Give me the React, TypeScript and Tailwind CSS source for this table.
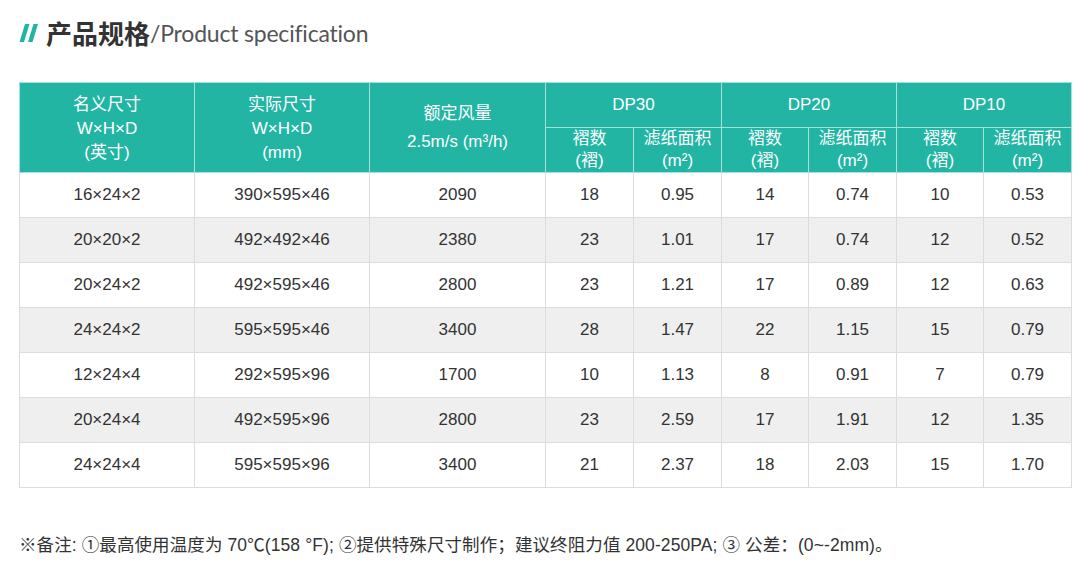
import React from "react";

const rows = [
  ["16×24×2", "390×595×46", "2090", "18", "0.95", "14", "0.74", "10", "0.53"],
  ["20×20×2", "492×492×46", "2380", "23", "1.01", "17", "0.74", "12", "0.52"],
  ["20×24×2", "492×595×46", "2800", "23", "1.21", "17", "0.89", "12", "0.63"],
  ["24×24×2", "595×595×46", "3400", "28", "1.47", "22", "1.15", "15", "0.79"],
  ["12×24×4", "292×595×96", "1700", "10", "1.13", "8", "0.91", "7", "0.79"],
  ["20×24×4", "492×595×96", "2800", "23", "2.59", "17", "1.91", "12", "1.35"],
  ["24×24×4", "595×595×96", "3400", "21", "2.37", "18", "2.03", "15", "1.70"],
];

const widths = [175, 175, 176, 88, 88, 87, 88, 87, 88];

const font = { fontFamily: '"Liberation Sans", "Noto Sans CJK SC", sans-serif' };

export default function App() {
  const th = "border border-[#a6e0d8] font-normal text-white text-[17px] text-center align-middle p-0";
  const sub = (
    <>
      <th className={th + " leading-[22px]"}>褶数<br />(褶)</th>
      <th className={th + " leading-[22px]"}>滤纸面积<br />(m²)</th>
    </>
  );
  return (
    <div className="w-[1092px] h-[572px] bg-white overflow-hidden" style={font}>
      <div className="flex items-center pl-[19px] pt-[10px] h-[56px]">
        <svg width="20" height="22" viewBox="0 0 20 22" className="mr-[7px]">
          <polygon points="6,2 10.5,2 5,20 0.5,20" fill="#22b5a4" />
          <polygon points="14.5,2 19,2 13.5,20 9,20" fill="#22b5a4" />
        </svg>
        <span className="text-[26px] font-bold text-[#333] leading-none" style={{ fontFamily: '"Noto Sans CJK SC", sans-serif' }}>产品规格</span>
        <span className="text-[23px] text-[#555] leading-none tracking-[-0.2px]" style={{ fontFamily: 'Lato, "Noto Sans", sans-serif' }}>/Product specification</span>
      </div>
      <div className="pl-[19px] pt-[26px]">
        <table className="border-collapse table-fixed w-[1052px] border border-[#dcdcdc]">
          <colgroup>
            {widths.map((w, i) => (
              <col key={i} style={{ width: w }} />
            ))}
          </colgroup>
          <thead className="bg-[#22b5a4]">
            <tr className="h-[45px]">
              <th rowSpan={2} className={th + " leading-[24px] pt-[3px]"}>名义尺寸<br />W×H×D<br />(英寸)</th>
              <th rowSpan={2} className={th + " leading-[24px] pt-[3px]"}>实际尺寸<br />W×H×D<br />(mm)</th>
              <th rowSpan={2} className={th + " leading-[28px]"}>额定风量<br />2.5m/s (m³/h)</th>
              <th colSpan={2} className={th}>DP30</th>
              <th colSpan={2} className={th}>DP20</th>
              <th colSpan={2} className={th}>DP10</th>
            </tr>
            <tr className="h-[44px]">
              {sub}
              {sub}
              {sub}
            </tr>
          </thead>
          <tbody>
            {rows.map((r, i) => (
              <tr key={i} className={"h-[45px] " + (i % 2 === 1 ? "bg-[#efefef]" : "bg-white")}>
                {r.map((c, j) => (
                  <td key={j} className="border border-[#dcdcdc] text-center align-middle text-[17px] text-[#333] p-0">
                    {c}
                  </td>
                ))}
              </tr>
            ))}
          </tbody>
        </table>
      </div>
      <div className="pl-[19px] pt-[44px] text-[17.5px] tracking-[0.1px] text-[#333]">
        ※备注: ①最高使用温度为 70℃(158 °F); ②提供特殊尺寸制作；建议终阻力值 200-250PA; ③ 公差：(0~-2mm)。
      </div>
    </div>
  );
}
